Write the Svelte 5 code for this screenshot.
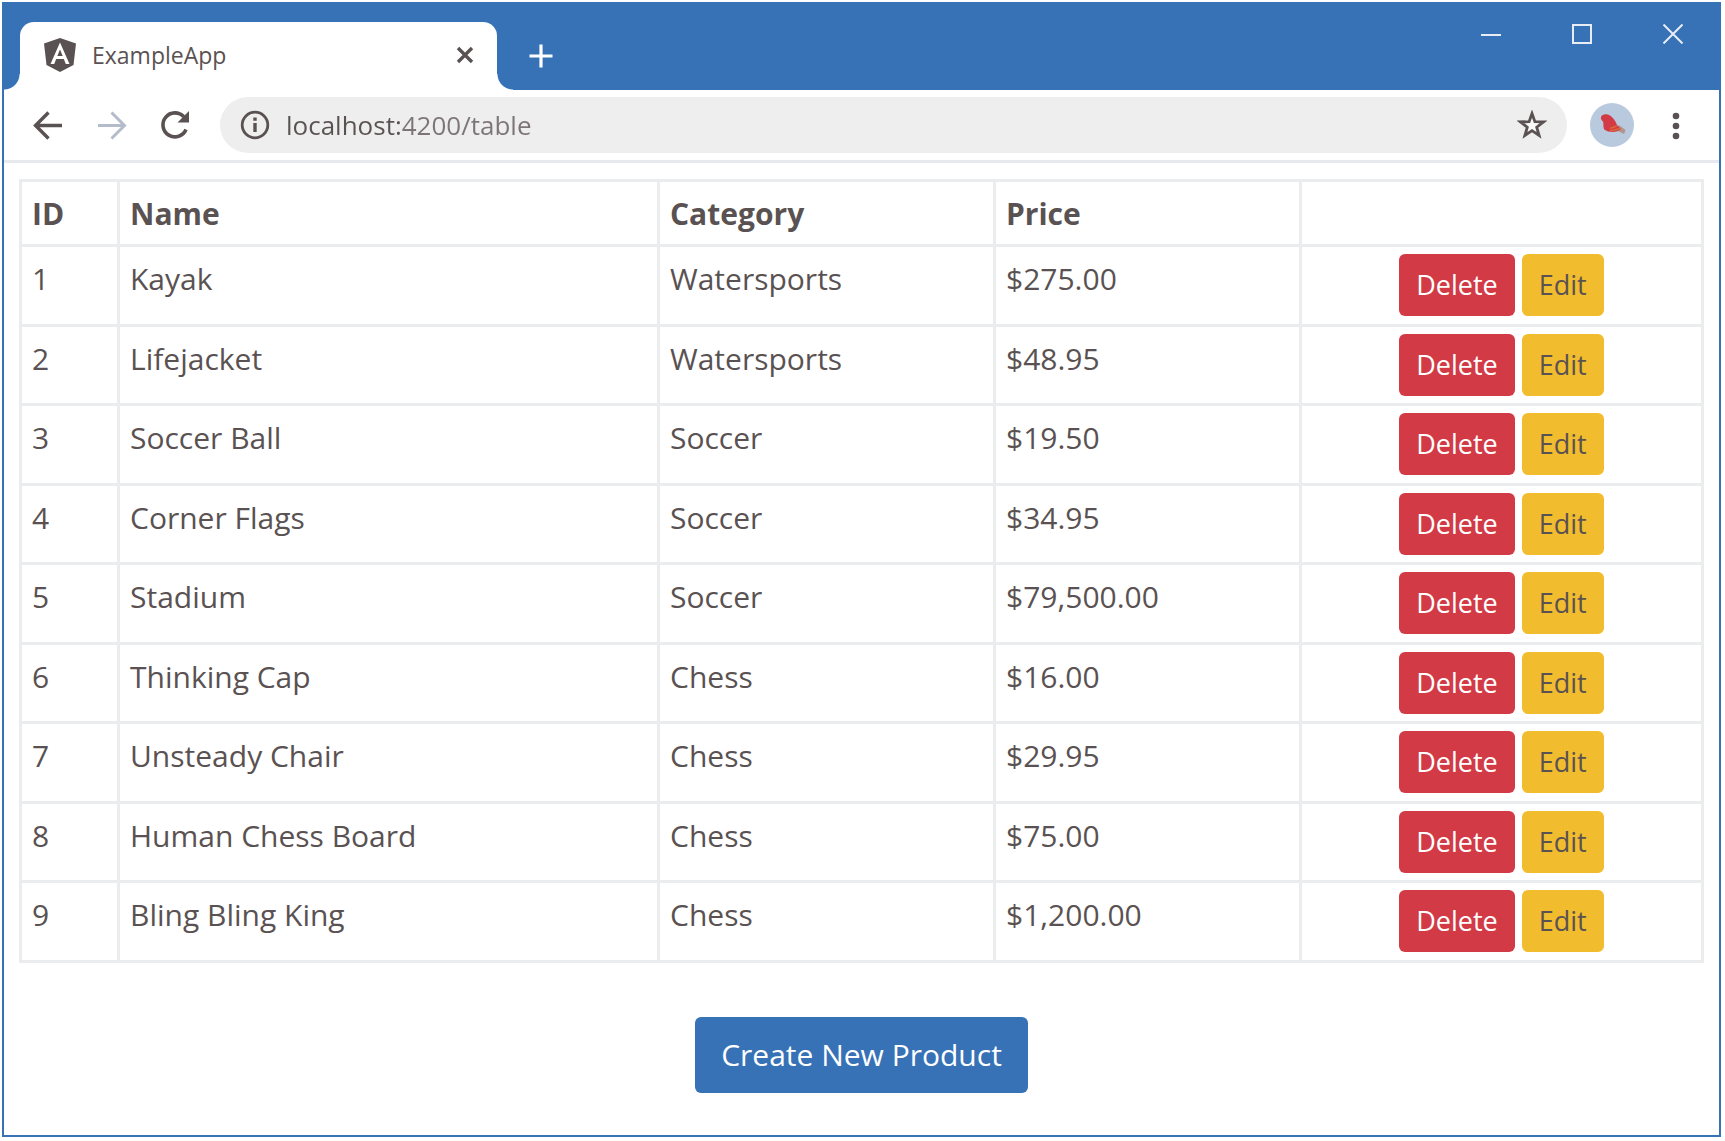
<script>
  const products = [
    { id: 1, name: 'Kayak', category: 'Watersports', price: 275 },
    { id: 2, name: 'Lifejacket', category: 'Watersports', price: 48.95 },
    { id: 3, name: 'Soccer Ball', category: 'Soccer', price: 19.5 },
    { id: 4, name: 'Corner Flags', category: 'Soccer', price: 34.95 },
    { id: 5, name: 'Stadium', category: 'Soccer', price: 79500 },
    { id: 6, name: 'Thinking Cap', category: 'Chess', price: 16 },
    { id: 7, name: 'Unsteady Chair', category: 'Chess', price: 29.95 },
    { id: 8, name: 'Human Chess Board', category: 'Chess', price: 75 },
    { id: 9, name: 'Bling Bling King', category: 'Chess', price: 1200 },
  ];
  const currency = new Intl.NumberFormat('en-US', { style: 'currency', currency: 'USD' });
</script>

<div class="window">
  <header class="titlebar">
    <div class="tab">
      <svg class="logo" viewBox="0 0 34 34" aria-hidden="true">
        <path fill="#5a5252" d="M17 0 33 5.500 30.500 27 17 34 3.500 27 1 5.500z" />
        <path fill="#fff" fill-rule="evenodd" d="M17 4.500 7.500 26h3.700l2-5h7.600l2 5h3.700zM17 11.500l2.700 6.500h-5.400z" />
      </svg>
      <span class="tab-title">ExampleApp</span>
      <button class="icon-btn tab-close" aria-label="Close tab">
        <svg width="18" height="18" viewBox="0 0 18 18"><path d="M2 2 16 16M16 2 2 16" stroke="#5a5252" stroke-width="3.400" /></svg>
      </button>
    </div>
    <button class="icon-btn new-tab" aria-label="New tab">
      <svg width="24" height="24" viewBox="0 0 24 24"><path d="M12 0.500V23.500M0.500 12H23.500" stroke="#fff" stroke-width="3.200" /></svg>
    </button>
    <div class="controls">
      <button class="icon-btn" aria-label="Minimize">
        <svg width="20" height="20" viewBox="0 0 20 20"><path d="M0 11H20" stroke="#e8edf5" stroke-width="2" /></svg>
      </button>
      <button class="icon-btn" aria-label="Maximize">
        <svg width="20" height="20" viewBox="0 0 20 20"><rect x="1" y="1" width="18" height="18" fill="none" stroke="#e8edf5" stroke-width="2" /></svg>
      </button>
      <button class="icon-btn" aria-label="Close">
        <svg width="20" height="20" viewBox="0 0 20 20"><path d="M0.500 0.500 19.500 19.500M19.500 0.500 0.500 19.500" stroke="#e8edf5" stroke-width="2" /></svg>
      </button>
    </div>
  </header>

  <nav class="toolbar">
    <button class="icon-btn" aria-label="Back">
      <svg width="32" height="32" viewBox="0 0 32 32"><path d="M30 16.500H4M16.500 3.500 3.500 16.500l13 13" fill="none" stroke="#5a5252" stroke-width="3.400" /></svg>
    </button>
    <button class="icon-btn" aria-label="Forward">
      <svg width="32" height="32" viewBox="0 0 32 32"><path d="M2 16.500H28M15.500 3.500 28.500 16.500l-13 13" fill="none" stroke="#b4bccb" stroke-width="3" /></svg>
    </button>
    <button class="icon-btn" aria-label="Reload">
      <svg width="32" height="32" viewBox="0 0 32 32"><path d="M26 20.500A12 12 0 1 1 23.800 7.800" fill="none" stroke="#5a5252" stroke-width="3.600" /><path d="M29 2V13.500H17.500z" fill="#5a5252" /></svg>
    </button>
    <div class="address">
      <button class="icon-btn" aria-label="Site information">
        <svg width="30" height="30" viewBox="0 0 30 30"><circle cx="15" cy="15" r="12.800" fill="none" stroke="#5a5252" stroke-width="2.800" /><path d="M15 13V22M15 7.500V10.800" stroke="#5a5252" stroke-width="3.400" /></svg>
      </button>
      <input type="text" aria-label="Address" value="localhost:4200/table" />
      <button class="icon-btn" aria-label="Bookmark">
        <svg width="30" height="30" viewBox="0 0 30 30"><path d="M15 3.500 17.900 11.600 26.500 11.900 19.700 17.200 22.100 25.500 15 20.700 7.900 25.500 10.300 17.200 3.500 11.900 12.100 11.600z" fill="#f8f8f8" stroke="#5a5252" stroke-width="2.800" /></svg>
      </button>
    </div>
    <button class="icon-btn profile" aria-label="Profile">
      <svg width="44" height="44" viewBox="0 0 44 44">
        <circle cx="22" cy="22" r="22" fill="#b9c9de" />
        <path d="M29 22 35.500 27 34 31 26 27z" fill="#b0968c" />
        <path d="M11 14C12 10.500 17 10.500 20 12.500 23 14.500 25.500 18 27 22L31 26C28 29.500 19 30 15 27 12.500 25 14 21 13 18.500 11.500 17 10.500 16 11 14z" fill="#d23a45" />
        <path d="M20 25.500 27 23M20 28 30 25.500" stroke="#dc6a3a" stroke-width="1.500" />
      </svg>
    </button>
    <button class="icon-btn" aria-label="Menu">
      <svg width="30" height="30" viewBox="0 0 30 30" fill="#5a5252"><circle cx="15" cy="6" r="3.300" /><circle cx="15" cy="16" r="3.300" /><circle cx="15" cy="26" r="3.300" /></svg>
    </button>
  </nav>

  <main>
    <table>
      <colgroup>
        <col class="c-id" /><col /><col class="c-category" /><col class="c-price" /><col class="c-actions" />
      </colgroup>
      <thead>
        <tr><th>ID</th><th>Name</th><th>Category</th><th>Price</th><th></th></tr>
      </thead>
      <tbody>
        {#each products as p (p.id)}
          <tr>
            <td>{p.id}</td>
            <td>{p.name}</td>
            <td>{p.category}</td>
            <td>{currency.format(p.price)}</td>
            <td class="actions-cell">
              <div class="actions">
                <button class="btn danger">Delete</button>
                <button class="btn warning">Edit</button>
              </div>
            </td>
          </tr>
        {/each}
      </tbody>
    </table>
    <button class="btn primary">Create New Product</button>
  </main>
</div>

<style>
  :global(body) {
    margin: 0;
    background: #fff;
  }
  .window {
    box-sizing: border-box;
    min-height: calc(100vh - 6px);
    margin: 2px 4px 0 2px;
    border: 2px solid #3672b5;
    border-top: 0;
    background: #fff;
    color: #5a5252;
    font-family: 'Open Sans', 'Noto Sans', sans-serif;
    font-size: 30px;
    line-height: 45px;
  }
  button {
    font-family: inherit;
    border: 0;
    cursor: pointer;
  }
  svg {
    display: block;
  }
  .icon-btn {
    flex: none;
    padding: 0;
    background: none;
  }
  .titlebar {
    display: flex;
    align-items: flex-start;
    height: 88px;
    padding-left: 16px;
    background: #3672b5;
  }
  .tab {
    position: relative;
    box-sizing: border-box;
    display: flex;
    align-items: center;
    width: 477px;
    height: 68px;
    margin-top: 20px;
    padding: 0 23px 2px;
    border-radius: 14px 14px 0 0;
    background: #fff;
  }
  .tab::before,
  .tab::after {
    content: '';
    position: absolute;
    bottom: 0;
    width: 16px;
    height: 16px;
  }
  .tab::before {
    right: 100%;
    background: radial-gradient(circle at 0 0, #3672b5 15px, #fff 16px);
  }
  .tab::after {
    left: 100%;
    background: radial-gradient(circle at 100% 0, #3672b5 15px, #fff 16px);
  }
  .logo {
    width: 34px;
    height: 34px;
    margin-right: 15px;
  }
  .tab-title {
    flex: 1;
    font-size: 23px;
  }
  .new-tab {
    margin: 42px 0 0 32px;
  }
  .controls {
    display: flex;
    gap: 71px;
    margin: 22px 36px 0 auto;
  }
  .toolbar {
    display: flex;
    align-items: center;
    gap: 32px;
    height: 70px;
    padding: 0 28px;
    border-bottom: 3px solid #e6e9ed;
  }
  .address {
    flex: 1;
    display: flex;
    align-items: center;
    gap: 16px;
    height: 56px;
    margin-right: -9px;
    margin-left: -4px;
    padding: 0 20px;
    border-radius: 28px;
    background: #eee;
  }
  .address input {
    flex: 1;
    min-width: 0;
    height: 40px;
    padding: 0;
    border: 0;
    outline: 0;
    color: #5a5252;
    font-family: inherit;
    font-size: 26px;
    background: linear-gradient(90deg, #5a5252 115px, #7c7478 115px) text;
    -webkit-text-fill-color: transparent;
  }
  .profile {
    margin-right: -5px;
  }
  main {
    display: flex;
    flex-direction: column;
    align-items: center;
    padding: 16px 15px 42px;
  }
  table {
    width: 100%;
    border-collapse: collapse;
    table-layout: fixed;
  }
  .c-id {
    width: 98px;
  }
  .c-category {
    width: 336px;
  }
  .c-price {
    width: 306px;
  }
  .c-actions {
    width: 402px;
  }
  th,
  td {
    padding: 9px 10px 8px;
    border: 3px solid #ebecee;
    text-align: left;
    vertical-align: top;
  }
  th {
    font-weight: 700;
  }
  .actions-cell {
    padding: 7px 10px;
  }
  tbody tr {
    height: 79px;
  }
  tbody tr:nth-child(odd) {
    height: 80px;
  }
  .actions {
    display: flex;
    justify-content: center;
    gap: 7px;
  }
  .btn {
    border-radius: 6px;
    font-size: 27px;
    line-height: 42px;
  }
  .danger,
  .warning {
    padding: 10px 17px;
  }
  .danger {
    background: #d23a45;
    color: #fff;
  }
  .warning {
    background: #f1bc2d;
    color: #5a5252;
  }
  .primary {
    margin-top: 54px;
    padding: 17px 26px;
    background: #3672b5;
    color: #fff;
    font-size: 30px;
  }
</style>
